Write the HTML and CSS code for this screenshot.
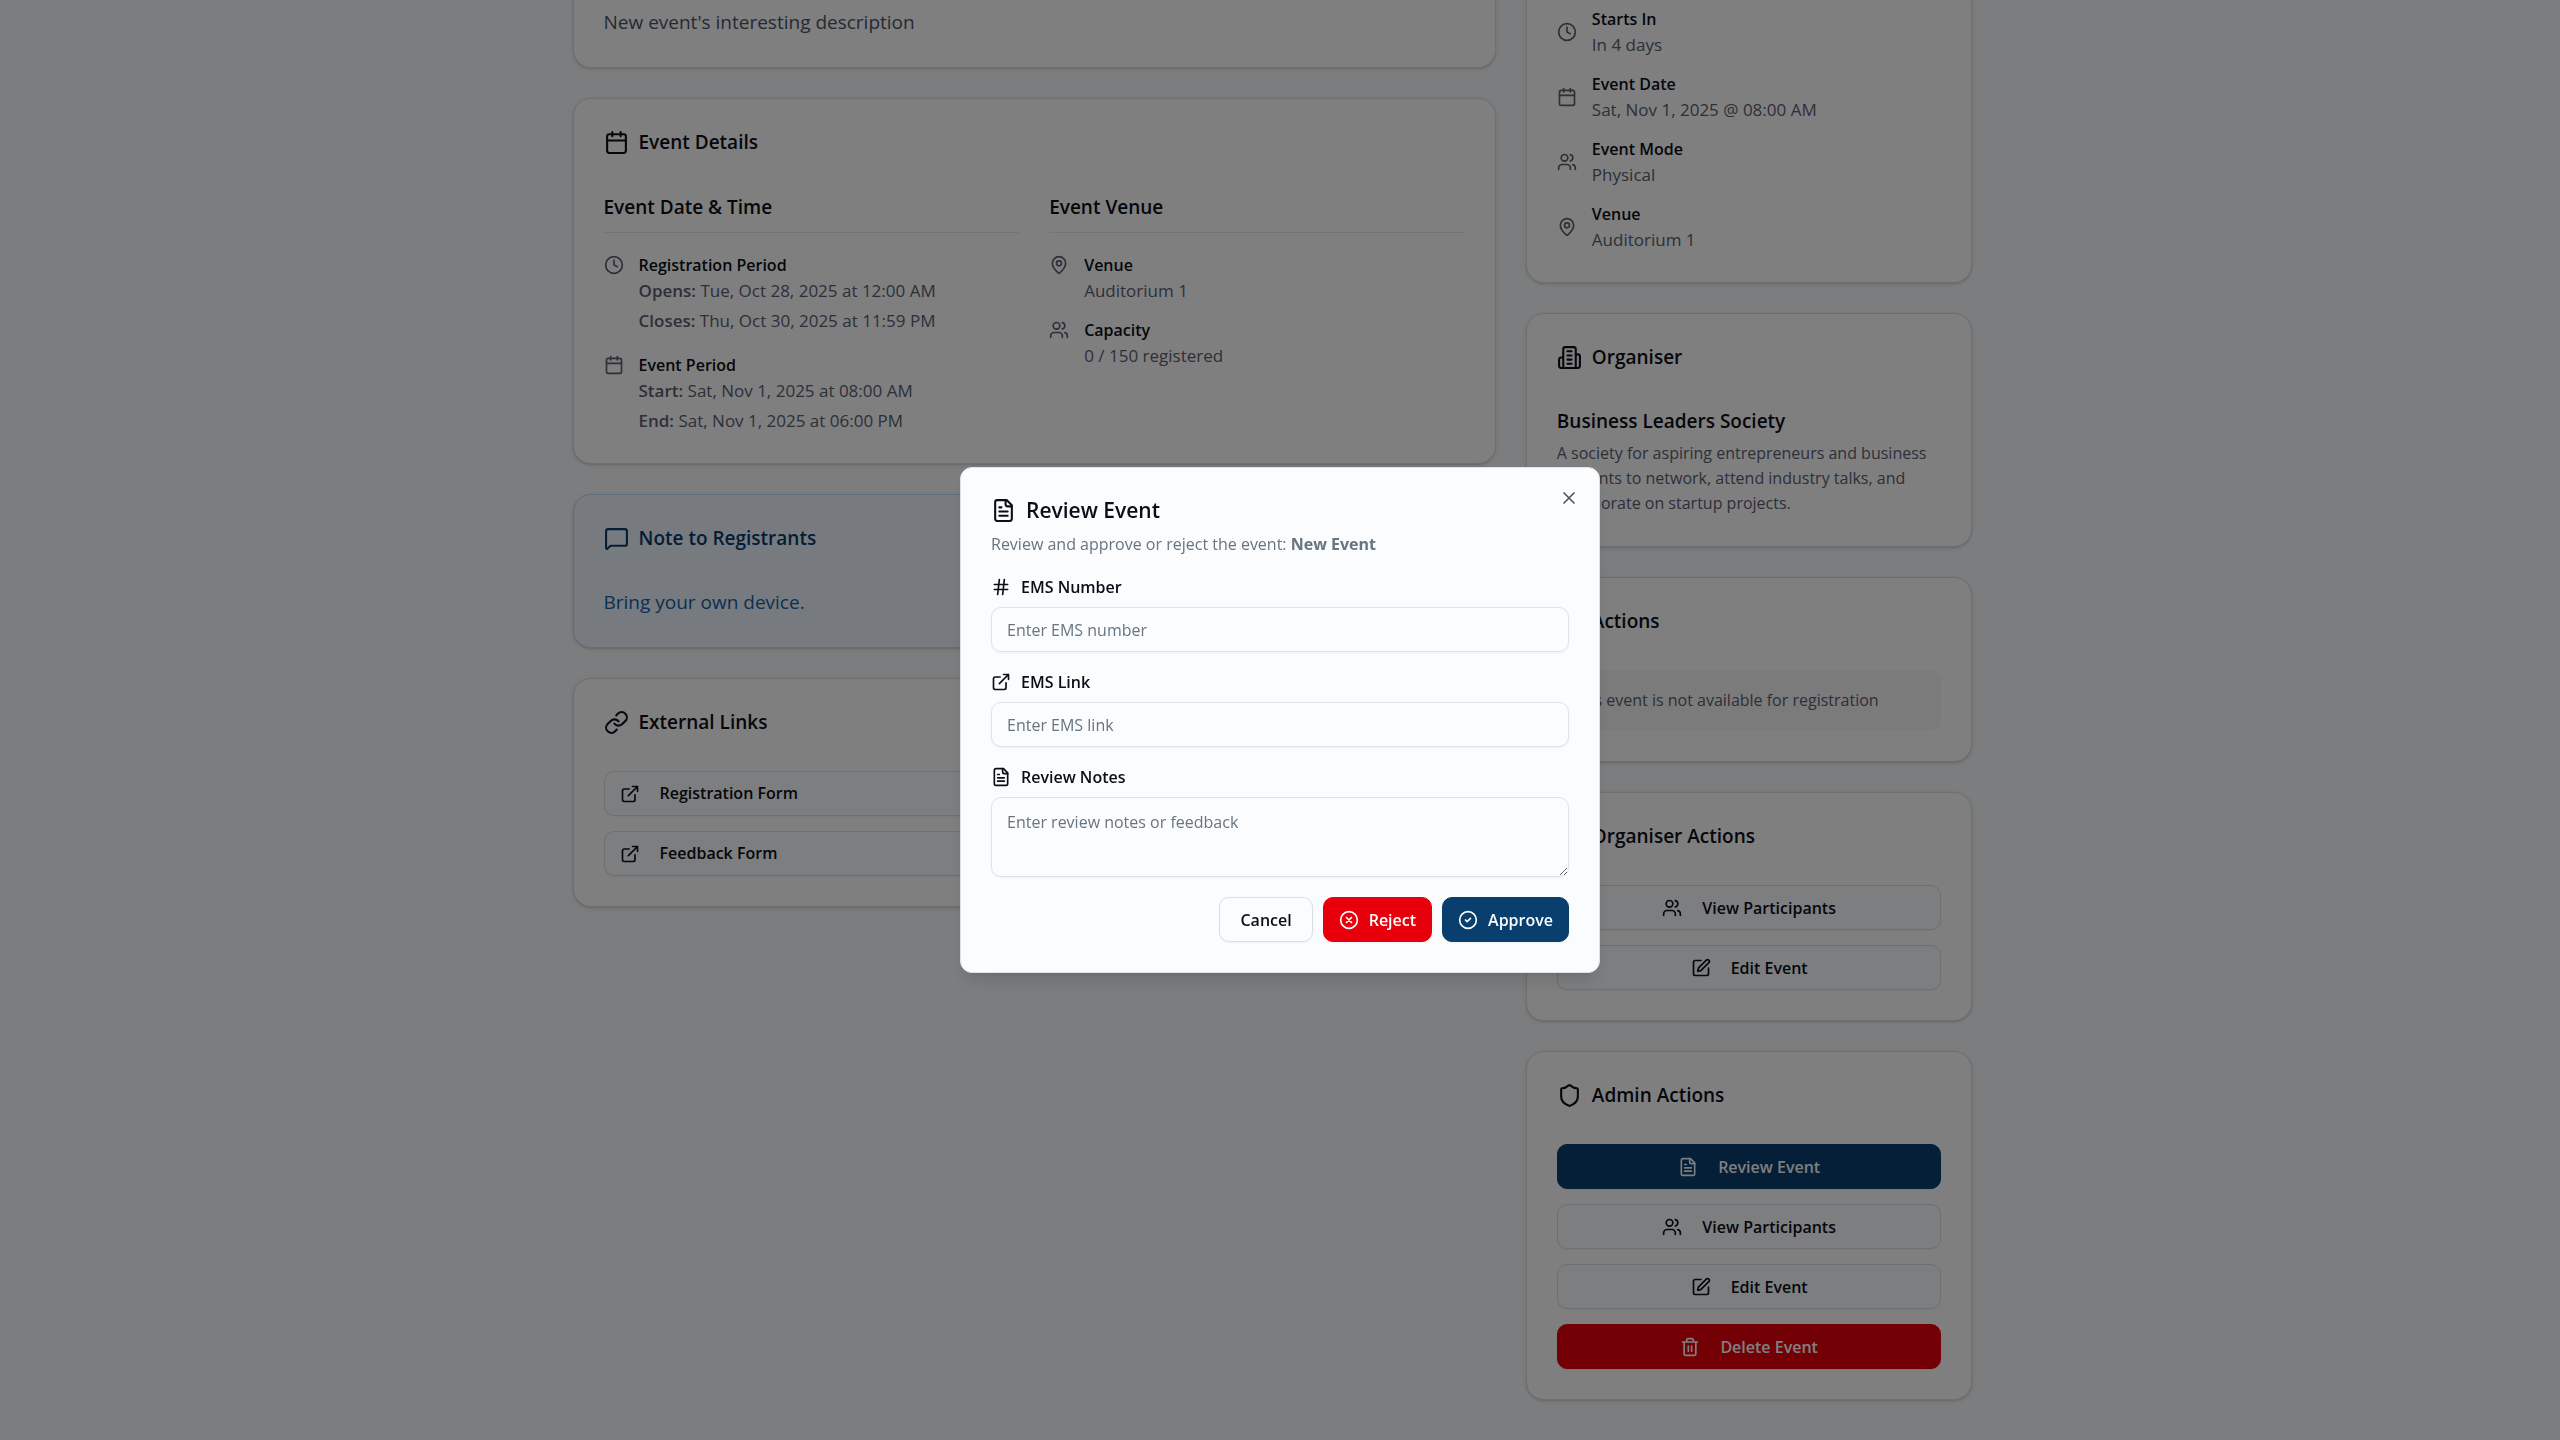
FILE: index.html
```html
<!DOCTYPE html>
<html lang="en">
<head>
  <meta charset="UTF-8" />
  <meta name="viewport" content="width=device-width, initial-scale=1.0" />
  <title>New Event</title>
  <link rel="stylesheet" href="styles.css">
</head>
<body>
  <!-- Icon set -->
  <svg class="sprite" aria-hidden="true">
    <symbol id="calendar" viewBox="0 0 24 24"><path d="M8 2v4M16 2v4M3 10h18"/><rect width="18" height="18" x="3" y="4" rx="2"/></symbol>
    <symbol id="clock" viewBox="0 0 24 24"><circle cx="12" cy="12" r="10"/><path d="M12 6v6l4 2"/></symbol>
    <symbol id="pin" viewBox="0 0 24 24"><path d="M20 10c0 4.993-5.539 10.193-7.399 11.799a1 1 0 0 1-1.202 0C9.539 20.193 4 14.993 4 10a8 8 0 0 1 16 0"/><circle cx="12" cy="10" r="3"/></symbol>
    <symbol id="users" viewBox="0 0 24 24"><path d="M16 21v-2a4 4 0 0 0-4-4H6a4 4 0 0 0-4 4v2M16 3.128a4 4 0 0 1 0 7.744M22 21v-2a4 4 0 0 0-3-3.87"/><circle cx="9" cy="7" r="4"/></symbol>
    <symbol id="building" viewBox="0 0 24 24"><path d="M6 22V4a2 2 0 0 1 2-2h8a2 2 0 0 1 2 2v18ZM6 12H4a2 2 0 0 0-2 2v6a2 2 0 0 0 2 2h2M18 9h2a2 2 0 0 1 2 2v9a2 2 0 0 1-2 2h-2M10 6h4M10 10h4M10 14h4M10 18h4"/></symbol>
    <symbol id="message" viewBox="0 0 24 24"><path d="M22 17a2 2 0 0 1-2 2H6.828a2 2 0 0 0-1.414.586l-2.202 2.202A.71.71 0 0 1 2 21.286V5a2 2 0 0 1 2-2h16a2 2 0 0 1 2 2z"/></symbol>
    <symbol id="link" viewBox="0 0 24 24"><path d="M10 13a5 5 0 0 0 7.54.54l3-3a5 5 0 0 0-7.07-7.07l-1.72 1.71"/><path d="M14 11a5 5 0 0 0-7.54-.54l-3 3a5 5 0 0 0 7.07 7.07l1.71-1.71"/></symbol>
    <symbol id="external" viewBox="0 0 24 24"><path d="M15 3h6v6M10 14 21 3M18 13v6a2 2 0 0 1-2 2H5a2 2 0 0 1-2-2V8a2 2 0 0 1 2-2h6"/></symbol>
    <symbol id="edit" viewBox="0 0 24 24"><path d="M12 3H5a2 2 0 0 0-2 2v14a2 2 0 0 0 2 2h14a2 2 0 0 0 2-2v-7"/><path d="M18.375 2.625a1 1 0 0 1 3 3l-9.013 9.014a2 2 0 0 1-.853.505l-2.873.84a.5.5 0 0 1-.62-.62l.84-2.873a2 2 0 0 1 .506-.852z"/></symbol>
    <symbol id="shield" viewBox="0 0 24 24"><path d="M20 13c0 5-3.5 7.5-7.66 8.95a1 1 0 0 1-.67-.01C7.5 20.5 4 18 4 13V6a1 1 0 0 1 1-1c2 0 4.5-1.2 6.24-2.72a1.17 1.17 0 0 1 1.52 0C14.51 3.81 17 5 19 5a1 1 0 0 1 1 1z"/></symbol>
    <symbol id="file" viewBox="0 0 24 24"><path d="M15 2H6a2 2 0 0 0-2 2v16a2 2 0 0 0 2 2h12a2 2 0 0 0 2-2V7Z"/><path d="M14 2v4a2 2 0 0 0 2 2h4M10 9H8M16 13H8M16 17H8"/></symbol>
    <symbol id="trash" viewBox="0 0 24 24"><path d="M3 6h18M19 6v14a2 2 0 0 1-2 2H7a2 2 0 0 1-2-2V6M8 6V4a2 2 0 0 1 2-2h4a2 2 0 0 1 2 2v2M10 11v6M14 11v6"/></symbol>
    <symbol id="hash" viewBox="0 0 24 24"><path d="M4 9h16M4 15h16M10 3 8 21M16 3l-2 18"/></symbol>
    <symbol id="circle-x" viewBox="0 0 24 24"><circle cx="12" cy="12" r="10"/><path d="m15 9-6 6M9 9l6 6"/></symbol>
    <symbol id="circle-check" viewBox="0 0 24 24"><circle cx="12" cy="12" r="10"/><path d="m9 12 2 2 4-4"/></symbol>
    <symbol id="close" viewBox="0 0 24 24"><path d="M18 6 6 18M6 6l12 12"/></symbol>
  </svg>

  <main class="page">
    <div class="column">
      <section class="card card-top">
        <p class="text">New event's interesting description</p>
      </section>

      <section class="card">
        <h2 class="card-title"><svg class="icon-lg"><use href="#calendar"/></svg>Event Details</h2>
        <div class="details">
          <div>
            <h3 class="subtitle divided">Event Date &amp; Time</h3>
            <ul class="info-list periods">
              <li class="info">
                <svg class="icon"><use href="#clock"/></svg>
                <div>
                  <h4>Registration Period</h4>
                  <p><strong>Opens:</strong> Tue, Oct 28, 2025 at 12:00 AM</p>
                  <p><strong>Closes:</strong> Thu, Oct 30, 2025 at 11:59 PM</p>
                </div>
              </li>
              <li class="info">
                <svg class="icon"><use href="#calendar"/></svg>
                <div>
                  <h4>Event Period</h4>
                  <p><strong>Start:</strong> Sat, Nov 1, 2025 at 08:00 AM</p>
                  <p><strong>End:</strong> Sat, Nov 1, 2025 at 06:00 PM</p>
                </div>
              </li>
            </ul>
          </div>
          <div>
            <h3 class="subtitle divided">Event Venue</h3>
            <ul class="info-list">
              <li class="info">
                <svg class="icon"><use href="#pin"/></svg>
                <div>
                  <h4>Venue</h4>
                  <p>Auditorium 1</p>
                </div>
              </li>
              <li class="info">
                <svg class="icon"><use href="#users"/></svg>
                <div>
                  <h4>Capacity</h4>
                  <p>0 / 150 registered</p>
                </div>
              </li>
            </ul>
          </div>
        </div>
      </section>

      <section class="card note">
        <h2 class="card-title"><svg class="icon-lg"><use href="#message"/></svg>Note to Registrants</h2>
        <p class="text">Bring your own device.</p>
      </section>

      <section class="card">
        <h2 class="card-title"><svg class="icon-lg"><use href="#link"/></svg>External Links</h2>
        <div class="stack">
          <a class="btn btn-link" href="#"><svg class="icon"><use href="#external"/></svg>Registration Form</a>
          <a class="btn btn-link" href="#"><svg class="icon"><use href="#external"/></svg>Feedback Form</a>
        </div>
      </section>
    </div>

    <aside class="column">
      <section class="card card-top">
        <ul class="info-list centered">
          <li class="info">
            <svg class="icon"><use href="#clock"/></svg>
            <div>
              <h4>Starts In</h4>
              <p>In 4 days</p>
            </div>
          </li>
          <li class="info">
            <svg class="icon"><use href="#calendar"/></svg>
            <div>
              <h4>Event Date</h4>
              <p>Sat, Nov 1, 2025 @ 08:00 AM</p>
            </div>
          </li>
          <li class="info">
            <svg class="icon"><use href="#users"/></svg>
            <div>
              <h4>Event Mode</h4>
              <p>Physical</p>
            </div>
          </li>
          <li class="info">
            <svg class="icon"><use href="#pin"/></svg>
            <div>
              <h4>Venue</h4>
              <p>Auditorium 1</p>
            </div>
          </li>
        </ul>
      </section>

      <section class="card">
        <h2 class="card-title"><svg class="icon-lg"><use href="#building"/></svg>Organiser</h2>
        <h3 class="subtitle">Business Leaders Society</h3>
        <p class="about">A society for aspiring entrepreneurs and business students to network, attend industry talks, and collaborate on startup projects.</p>
      </section>

      <section class="card">
        <h2 class="card-title"><svg class="icon-lg"><use href="#users"/></svg>Actions</h2>
        <p class="notice">This event is not available for registration</p>
      </section>

      <section class="card">
        <h2 class="card-title"><svg class="icon-lg"><use href="#users"/></svg>Organiser Actions</h2>
        <div class="stack">
          <button class="btn" type="button"><svg class="icon"><use href="#users"/></svg>View Participants</button>
          <button class="btn" type="button"><svg class="icon"><use href="#edit"/></svg>Edit Event</button>
        </div>
      </section>

      <section class="card">
        <h2 class="card-title"><svg class="icon-lg"><use href="#shield"/></svg>Admin Actions</h2>
        <div class="stack">
          <button class="btn btn-primary" type="button"><svg class="icon"><use href="#file"/></svg>Review Event</button>
          <button class="btn" type="button"><svg class="icon"><use href="#users"/></svg>View Participants</button>
          <button class="btn" type="button"><svg class="icon"><use href="#edit"/></svg>Edit Event</button>
          <button class="btn btn-danger" type="button"><svg class="icon"><use href="#trash"/></svg>Delete Event</button>
        </div>
      </section>
    </aside>
  </main>

  <!-- Review dialog -->
  <div class="overlay">
    <form class="dialog" role="dialog" aria-modal="true" aria-labelledby="dialog-title">
      <button class="close" type="button" aria-label="Close"><svg class="icon"><use href="#close"/></svg></button>

      <header class="dialog-header">
        <h2 class="dialog-title" id="dialog-title"><svg class="icon-lg"><use href="#file"/></svg>Review Event</h2>
        <p class="dialog-text">Review and approve or reject the event: <strong>New Event</strong></p>
      </header>

      <div class="field">
        <label for="ems-number"><svg class="icon"><use href="#hash"/></svg>EMS Number</label>
        <input id="ems-number" type="text" placeholder="Enter EMS number">
      </div>
      <div class="field">
        <label for="ems-link"><svg class="icon"><use href="#external"/></svg>EMS Link</label>
        <input id="ems-link" type="url" placeholder="Enter EMS link">
      </div>
      <div class="field">
        <label for="notes"><svg class="icon"><use href="#file"/></svg>Review Notes</label>
        <textarea id="notes" placeholder="Enter review notes or feedback"></textarea>
      </div>

      <footer class="dialog-footer">
        <button class="btn btn-cancel" type="button">Cancel</button>
        <button class="btn btn-danger" type="button"><svg class="icon"><use href="#circle-x"/></svg>Reject</button>
        <button class="btn btn-primary" type="submit"><svg class="icon"><use href="#circle-check"/></svg>Approve</button>
      </footer>
    </form>
  </div>
</body>
</html>
```

FILE: styles.css
```css
* {
  box-sizing: border-box;
  margin: 0;
  padding: 0;
}
body {
  height: 100vh;
  overflow: hidden;
  padding-right: 15px; /* space kept for the locked scrollbar */
  background-color: #f9fafc;
  color: #0a0e17;
  font-family: "Open Sans", "Noto Sans", sans-serif;
  font-size: 16px;
  line-height: 25px;
}
ul {
  list-style: none;
}
svg {
  flex-shrink: 0;
  fill: none;
  stroke: currentColor;
  stroke-width: 2;
  stroke-linecap: round;
  stroke-linejoin: round;
}
.sprite {
  position: absolute;
  width: 0;
  height: 0;
}
.icon {
  width: 20px;
  height: 20px;
}
.icon-lg {
  width: 25px;
  height: 25px;
}

/* Page */
.page {
  display: grid;
  grid-template-columns: repeat(3, 1fr);
  gap: 30px;
  max-width: 1400px;
  margin: 0 auto;
}
.column {
  display: flex;
  flex-direction: column;
  gap: 30px;
}
.column:first-child {
  grid-column: span 2;
}
.card {
  padding: 30px;
  background-color: #fff;
  border: 1px solid #dadfe4;
  border-radius: 18px;
  box-shadow: 0 1px 4px rgba(0, 0, 0, 0.1), 0 1px 2px rgba(0, 0, 0, 0.1);
}
.card-top {
  padding-top: 7px;
  border-top: 0;
  border-top-left-radius: 0;
  border-top-right-radius: 0;
}
.card-title {
  display: flex;
  align-items: center;
  gap: 10px;
  height: 27px;
  margin-bottom: 35px;
  font-size: 19px;
  font-weight: 600;
}
.subtitle {
  font-size: 19px;
  font-weight: 600;
  line-height: 30px;
}
.divided {
  margin-bottom: 20px;
  padding: 1px 0 10px;
  border-bottom: 1px solid #e7e9ec;
}
.text {
  color: #475569;
  font-size: 19px;
  line-height: 30px;
}

.details {
  display: grid;
  grid-template-columns: 1fr 1fr;
  gap: 30px;
}
.info-list {
  display: flex;
  flex-direction: column;
  gap: 15px;
}
.periods {
  gap: 20px;
}
.periods p + p {
  margin-top: 5px;
}
.info {
  display: flex;
  gap: 15px;
  color: #5a6072;
}
.info .icon {
  margin-top: 2px;
}
.centered .info {
  align-items: center;
}
.centered .icon {
  margin-top: 0;
}
.info h4 {
  color: #0a0e17;
  font-size: 16px;
  font-weight: 600;
}
.info p {
  font-size: 17px;
}
.info strong {
  font-weight: 600;
}
.about {
  margin-top: 5px;
  color: #5a6072;
}
.notice {
  padding: 18px 15px;
  background-color: #f7f7f8;
  border-radius: 12px;
  color: #5a6072;
}

.note {
  background-color: #eff6ff;
  border-color: #bedbf0;
  color: #083b6e;
}
.note .text {
  color: #1560a5;
}

/* Buttons */
.stack {
  display: flex;
  flex-direction: column;
  gap: 15px;
}
.btn {
  display: flex;
  align-items: center;
  justify-content: center;
  gap: 20px;
  height: 45px;
  padding: 0 15px;
  background-color: #fbfcfe;
  border: 1px solid #dadfe4;
  border-radius: 10px;
  box-shadow: 0 1px 2px rgba(0, 0, 0, 0.05);
  color: #0a0e17;
  font-family: inherit;
  font-size: 16px;
  font-weight: 600;
  text-decoration: none;
  cursor: pointer;
}
.btn-link {
  justify-content: flex-start;
}
.btn-primary {
  background-color: #083f6e;
  border-color: #083f6e;
  color: #fbfcfe;
}
.btn-danger {
  background-color: #e7000b;
  border-color: #e7000b;
  color: #fff;
}

/* Dialog */
.overlay {
  position: fixed;
  inset: 0;
  display: flex;
  align-items: center;
  justify-content: center;
  background-color: rgba(0, 0, 0, 0.5);
}
.dialog {
  position: relative;
  display: flex;
  flex-direction: column;
  gap: 20px;
  width: 100%;
  max-width: 640px;
  padding: 30px;
  background-color: #fbfcfe;
  border: 1px solid #dfe2e6;
  border-radius: 12px;
  box-shadow: 0 12px 18px -4px rgba(0, 0, 0, 0.1), 0 5px 8px -5px rgba(0, 0, 0, 0.1);
}
.close {
  position: absolute;
  top: 20px;
  right: 20px;
  display: flex;
  background: none;
  border: 0;
  color: #0a0e17;
  opacity: 0.7;
  cursor: pointer;
}
.dialog-header {
  display: flex;
  flex-direction: column;
  gap: 9px;
}
.dialog-title {
  display: flex;
  align-items: center;
  gap: 10px;
  font-size: 21px;
  font-weight: 600;
}
.dialog-text {
  color: #66757f;
}
.field {
  display: flex;
  flex-direction: column;
  gap: 10px;
}
.field label {
  display: flex;
  align-items: center;
  gap: 10px;
  height: 20px;
  font-weight: 600;
}
.field input,
.field textarea {
  width: 100%;
  height: 45px;
  padding: 1px 15px 0;
  background-color: transparent;
  border: 1px solid #dfe2e6;
  border-radius: 10px;
  box-shadow: 0 1px 2px rgba(0, 0, 0, 0.05);
  color: inherit;
  font-family: inherit;
  font-size: 16px;
  line-height: 25px;
}
.field textarea {
  height: 80px;
  padding: 12px 15px;
  resize: vertical;
}
.field ::placeholder {
  color: #66757f;
}
.dialog-footer {
  display: flex;
  justify-content: flex-end;
  gap: 10px;
}
.dialog-footer .btn {
  gap: 10px;
}
.dialog-footer .btn-cancel {
  padding: 0 20px;
}
```
